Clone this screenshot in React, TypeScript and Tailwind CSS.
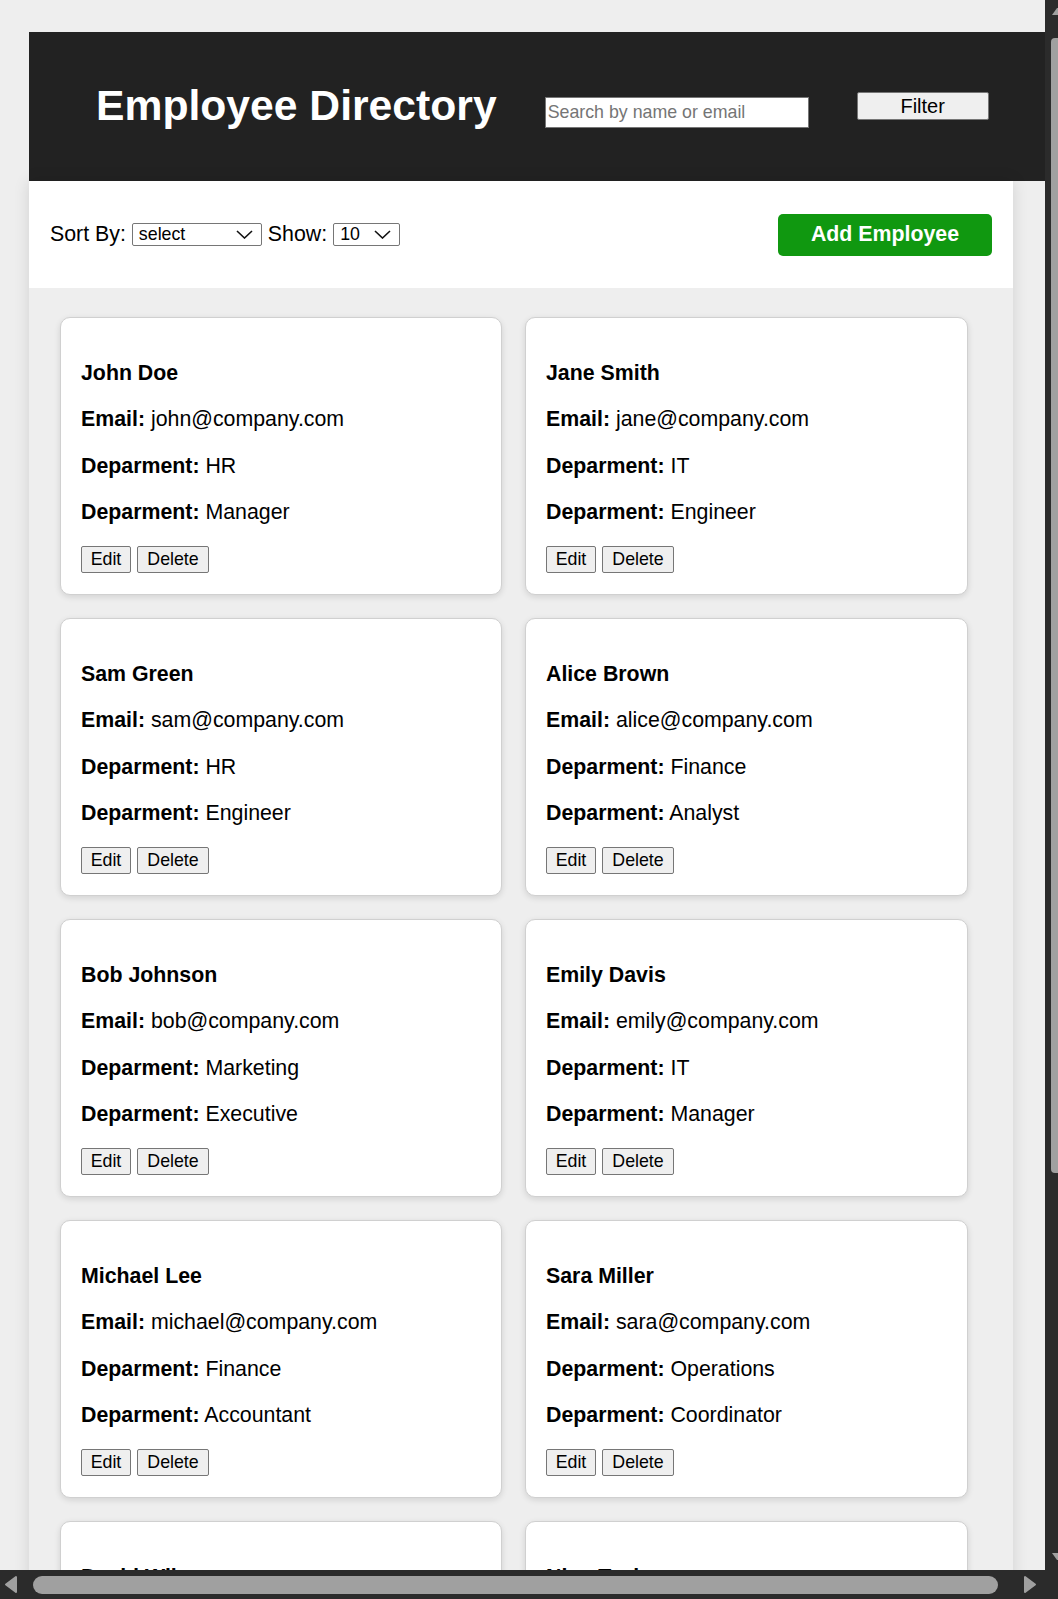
import React from "react";

type Emp = { name: string; email: string; dept: string; role: string };

const employees: Emp[] = [
  { name: "John Doe", email: "john@company.com", dept: "HR", role: "Manager" },
  { name: "Jane Smith", email: "jane@company.com", dept: "IT", role: "Engineer" },
  { name: "Sam Green", email: "sam@company.com", dept: "HR", role: "Engineer" },
  { name: "Alice Brown", email: "alice@company.com", dept: "Finance", role: "Analyst" },
  { name: "Bob Johnson", email: "bob@company.com", dept: "Marketing", role: "Executive" },
  { name: "Emily Davis", email: "emily@company.com", dept: "IT", role: "Manager" },
  { name: "Michael Lee", email: "michael@company.com", dept: "Finance", role: "Accountant" },
  { name: "Sara Miller", email: "sara@company.com", dept: "Operations", role: "Coordinator" },
  { name: "David Wilson", email: "david@company.com", dept: "IT", role: "Developer" },
  { name: "Nina Taylor", email: "nina@company.com", dept: "HR", role: "Recruiter" },
];

function Chevron() {
  return (
    <svg width="17" height="9" viewBox="0 0 17 9" className="block">
      <path d="M1 1 L8.5 8 L16 1" fill="none" stroke="#111" strokeWidth="1.6" />
    </svg>
  );
}

function FakeSelect({ value, width }: { value: string; width: string }) {
  return (
    <div
      className={`${width} h-[23px] border border-[#767676] rounded-[2px] bg-white flex items-center justify-between pl-[6px] pr-[8px] text-[17.8px] leading-none text-black`}
    >
      <span>{value}</span>
      <Chevron />
    </div>
  );
}

function Card({ e }: { e: Emp }) {
  return (
    <div className="bg-white border border-[#d0d0d0] rounded-[10px] shadow-[0_2px_6px_rgba(0,0,0,0.12)] pt-[43px] pl-[20px] pr-[20px] pb-[20px] h-[278px]">
      <div className="flex flex-col gap-[21.8px] text-[21.33px] leading-[24.5px] text-black">
        <div className="font-bold">{e.name}</div>
        <div>
          <span className="font-bold">Email:</span> {e.email}
        </div>
        <div>
          <span className="font-bold">Deparment:</span> {e.dept}
        </div>
        <div>
          <span className="font-bold">Deparment:</span> {e.role}
        </div>
      </div>
      <div className="flex gap-[6px] mt-[22px]">
        <button className="w-[50px] h-[27px] bg-[#efefef] border border-[#767676] rounded-[2px] text-[17.8px] leading-none text-black">
          Edit
        </button>
        <button className="w-[72px] h-[27px] bg-[#efefef] border border-[#767676] rounded-[2px] text-[17.8px] leading-none text-black">
          Delete
        </button>
      </div>
    </div>
  );
}

export default function App() {
  return (
    <div className="relative w-[1058px] h-[1599px] overflow-hidden bg-[#eeeeee] font-['Liberation_Sans',Arial,sans-serif]">
      <div className="pt-[32px] pl-[29px]">
        <header className="h-[149px] w-[1040px] bg-[#222222] flex items-start pl-[67px]">
          <h1 className="mt-[49px] text-[42.67px] leading-[49px] font-bold text-white whitespace-nowrap">
            Employee Directory
          </h1>
          <input
            type="text"
            placeholder="Search by name or email"
            className="ml-[48px] mt-[65px] w-[264px] h-[31px] bg-white border border-[#767676] px-[2px] text-[17.8px] text-black placeholder:text-[#757575] outline-none"
          />
          <button className="ml-[48px] mt-[60px] w-[132px] h-[28px] bg-[#efefef] border border-[#767676] rounded-[2px] text-[20px] leading-none text-black">
            Filter
          </button>
        </header>
        <main className="w-[984px] shadow-[0_0_15px_rgba(0,0,0,0.12)] bg-[#eeeeee] min-h-[1500px]">
          <div className="h-[107px] bg-white flex items-center justify-between px-[21px]">
            <div className="flex items-center gap-[6px] text-[21.33px] text-black">
              <span>Sort By:</span>
              <FakeSelect value="select" width="w-[130px]" />
              <span>Show:</span>
              <FakeSelect value="10" width="w-[67px]" />
            </div>
            <button className="w-[214px] h-[42px] bg-[#109810] rounded-[5px] text-white font-bold text-[21.33px] leading-none">
              Add Employee
            </button>
          </div>
          <div className="pt-[29px] pl-[31px] grid grid-cols-[442px_443px] gap-[23px]">
            {employees.map((e) => (
              <Card key={e.name} e={e} />
            ))}
          </div>
        </main>
      </div>

      {/* vertical scrollbar */}
      <div className="absolute right-0 top-0 w-[13px] h-[1570px] bg-[#2b2b2b]">
        <svg width="13" height="20" viewBox="0 0 13 20" className="absolute top-[2px] left-0">
          <path d="M7 13 L12 6 L13 6 L13 13 Z" fill="#a0a0a0" />
        </svg>
        <div className="absolute left-[6px] top-[38px] w-[7px] h-[1135px] bg-[#a0a0a0] rounded-l-[4px]" />
        <svg width="13" height="20" viewBox="0 0 13 20" className="absolute bottom-[4px] left-0">
          <path d="M7 7 L12 14 L13 14 L13 7 Z" fill="#a0a0a0" />
        </svg>
      </div>

      {/* horizontal scrollbar */}
      <div className="absolute left-0 bottom-0 w-full h-[29px] bg-[#2b2b2b]">
        <svg width="22" height="29" viewBox="0 0 22 29" className="absolute left-0 top-0">
          <path d="M6 14.5 L16 7 L16 22 Z" fill="#a0a0a0" strokeLinejoin="round" stroke="#a0a0a0" strokeWidth="2" />
        </svg>
        <div className="absolute left-[33px] top-[6px] w-[965px] h-[18px] bg-[#a0a0a0] rounded-full" />
        <svg width="22" height="29" viewBox="0 0 22 29" className="absolute left-[1018px] top-0">
          <path d="M17 14.5 L7 7 L7 22 Z" fill="#a0a0a0" strokeLinejoin="round" stroke="#a0a0a0" strokeWidth="2" />
        </svg>
      </div>
    </div>
  );
}
